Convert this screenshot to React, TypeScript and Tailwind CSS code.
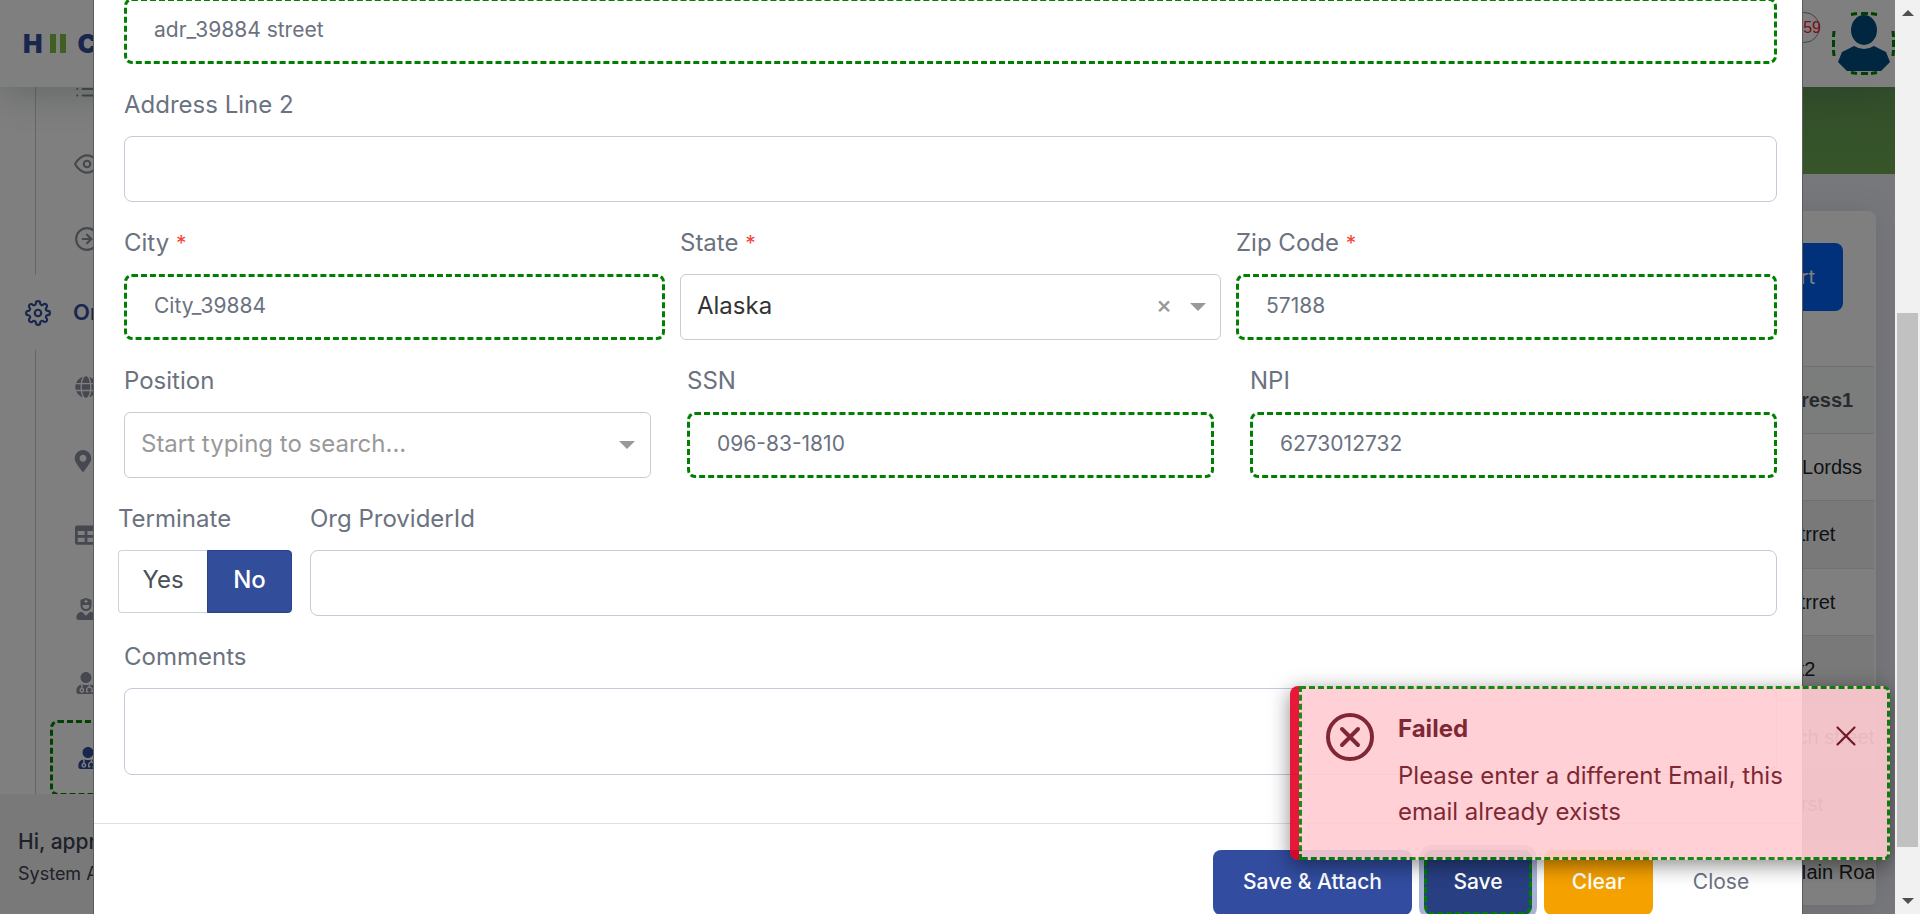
import { useState, type ReactNode } from "react";
import { FiArrowRightCircle, FiEye, FiList, FiSettings, FiX } from "react-icons/fi";
import { FaGlobe, FaMapMarkerAlt, FaTable, FaUserMd, FaUserNurse } from "react-icons/fa";

const dashed = "border-[3px] border-dashed border-[#008000]";
const plain = "border border-[#c5cad9]";
const field = "h-[66px] w-full bg-white pb-1 text-[21px] text-[#6b7280] outline-none";

function Label({ htmlFor, children, required }: { htmlFor: string; children: ReactNode; required?: boolean }) {
  return (
    <label htmlFor={htmlFor} className="mt-[25px] mb-[15px] block text-2xl leading-8 text-[#6b7280]">
      {children}
      {required && <> <span className="text-[21px] leading-6 text-[#f44336]">*</span></>}
    </label>
  );
}

function TextField({ id, label, value, required }: { id: string; label: string; value?: string; required?: boolean }) {
  return (
    <div className="min-w-0 flex-1">
      <Label htmlFor={id} required={required}>{label}</Label>
      <input id={id} defaultValue={value} className={`${field} block rounded-lg ${value ? `${dashed} px-[27px]` : `${plain} px-[29px]`}`} />
    </div>
  );
}

function Caret() {
  return <span className="pointer-events-none border-x-8 border-t-8 border-x-transparent border-t-[#999]" />;
}

function Sidebar() {
  return (
    <aside className="flex w-[330px] flex-none flex-col bg-white text-[#8a909d]">
      <nav className="min-h-0 flex-1 overflow-hidden">
        <ul className="-mt-9 ml-[35px] h-56 border-l border-[#c8cdd6] pl-[38px]">
          <li className="flex h-[75px] items-center"><FiList size={26} /></li>
          <li className="flex h-[75px] items-center"><FiEye size={26} /></li>
          <li className="flex h-[75px] items-center"><FiArrowRightCircle size={26} /></li>
        </ul>
        <div className="flex h-[75px] items-center gap-[22px] pl-[25px] text-[22px] font-semibold text-[#324d9a]">
          <FiSettings size={26} />
          Organization
        </div>
        <ul className="ml-[35px] border-l border-[#c8cdd6] pl-[39px]">
          <li className="flex h-[74px] items-center"><FaGlobe size={22} /></li>
          <li className="flex h-[74px] items-center"><FaMapMarkerAlt size={22} className="-ml-[3px]" /></li>
          <li className="flex h-[74px] items-center"><FaTable size={22} /></li>
          <li className="flex h-[74px] items-center"><FaUserNurse size={22} /></li>
          <li className="flex h-[74px] items-center"><FaUserMd size={22} /></li>
          <li className={`-ml-[25px] flex h-[76px] items-center rounded-lg ${dashed} pl-6 text-[#324d9a]`}><FaUserMd size={22} /></li>
        </ul>
      </nav>
      <div className="h-[120px] flex-none bg-[#f2f2f2] px-[18px] pt-8 text-[#3d4250]">
        <p className="text-[21px] leading-8 font-medium">Hi, appr</p>
        <p className="text-lg leading-8">System Admin</p>
      </div>
    </aside>
  );
}

const rows = ["Von Lordss", "10 strret", "10 strret", "Stret2", "Beach street", "1 horst", "12 Main Road"];

function Page() {
  return (
    <div className="flex h-full flex-col">
      <header className="z-10 flex h-[87px] flex-none items-center justify-between bg-white pl-[23px] shadow-[0_8px_40px_rgba(40,70,60,0.25)]">
        <div className="flex items-center gap-[7px] text-[26px] font-black text-[#324d9a]">
          H
          <span className="flex gap-1">
            <span className="h-[19px] w-1.5 bg-[#7ec142]" />
            <span className="h-[19px] w-1.5 bg-[#7ec142]" />
          </span>
          <span className="ml-[5px]">C</span>
        </div>
        <div className="flex items-center gap-3">
          <div className="mb-8 flex size-[31px] items-center justify-end rounded-full border border-[#888]">
            <span className="-mr-0.5 font-['Liberation_Sans'] text-base text-[#f02030]">59</span>
          </div>
          <svg width="63" height="63" viewBox="0 0 63 63" role="img" aria-label="Profile">
            <g fill="none" stroke="#008000" strokeWidth="3">
              <path d="M19 2.5l6-1M29 1.5h7M39 1.5l6 1M19 60.500l6 1M29 61.500h7M39 61.500l6-1M2 19l-.5 6M1.500 28v7M1.500 38l.5 6M61 19l.5 6M61.500 28v7M61.500 38l-.5 6" />
            </g>
            <ellipse cx="32" cy="18" rx="13" ry="15" fill="#004c80" />
            <path d="M22 34q10 6 20 0l12 6 4 10-9 9H15l-9-9 4-10z" fill="#004c80" />
          </svg>
        </div>
      </header>
      <div className="flex min-h-0 flex-1">
        <Sidebar />
        <main className="min-w-0 flex-1 bg-[#eff0f6]">
          <div className="h-[87px] bg-linear-to-br from-[#60955a] to-[#6eab52]" />
          <section className="mx-[19px] mt-[37px] rounded-lg bg-white pt-8 shadow-[0_0_30px_rgba(40,50,90,0.12)]">
            <div className="flex justify-end pr-[33px]">
              <button className="h-[68px] rounded-lg bg-[#0062f5] px-7 text-xl text-white">Export</button>
            </div>
            <div className="mt-[55px] mr-0.5 flex justify-end overflow-hidden border-t border-[#dfe3e3] font-['Liberation_Sans'] text-xl text-[#212529]">
              <table className="w-[112px] table-fixed border-collapse text-left">
                <thead>
                  <tr className="h-[66px] border-b border-[#dfe3e3] bg-[#f7fbfa] text-[#50545e]"><th>Address1</th></tr>
                </thead>
                <tbody>
                  {rows.map((row, i) => (
                    <tr key={i} className="border-b border-[#dfe3e3] odd:h-[67px] even:h-[68px] even:bg-[#f2f2f2]">
                      <td className="overflow-hidden whitespace-nowrap">{row}</td>
                    </tr>
                  ))}
                </tbody>
              </table>
            </div>
          </section>
        </main>
      </div>
    </div>
  );
}

function Modal() {
  const [terminate, setTerminate] = useState(false);
  return (
    <div role="dialog" aria-label="Provider" className="absolute inset-y-0 right-[93px] left-[94px] overflow-hidden bg-white outline outline-[#5c5c5c]">
      <form className="-mt-0.5" onSubmit={(e) => e.preventDefault()}>
        <div className="pr-[25px] pl-[30px]">
          <input aria-label="Address Line 1" defaultValue="adr_39884 street" className={`${field} ${dashed} block rounded-lg px-[27px]`} />
          <TextField id="address2" label="Address Line 2" />
          <div className="flex gap-[15px]">
            <TextField id="city" label="City" value="City_39884" required />
            <div className="min-w-0 flex-1">
              <Label htmlFor="state" required>State</Label>
              <div className="relative">
                <select id="state" className="block h-[66px] w-full appearance-none rounded-md border border-[#ccc] bg-white px-4 pb-0.5 text-2xl text-[#333]">
                  <option>Alaska</option>
                </select>
                <div className="pointer-events-none absolute inset-y-0 right-[15px] flex items-center gap-[18px]">
                  <button type="button" aria-label="Clear state" className="pointer-events-auto pb-1 text-2xl leading-6 font-medium text-[#999]">×</button>
                  <Caret />
                </div>
              </div>
            </div>
            <TextField id="zip" label="Zip Code" value="57188" required />
          </div>
          <div className="flex gap-9">
            <div className="min-w-0 flex-1">
              <Label htmlFor="position">Position</Label>
              <div className="relative flex items-center">
                <input id="position" placeholder="Start typing to search..." className="h-[66px] w-full rounded-md border border-[#ccc] px-4 pb-1 text-2xl text-[#333] placeholder:text-[#999]" />
                <span className="absolute right-4 flex"><Caret /></span>
              </div>
            </div>
            <TextField id="ssn" label="SSN" value="096-83-1810" />
            <TextField id="npi" label="NPI" value="6273012732" />
          </div>
          <div className="-ml-1.5 flex gap-[18px]">
            <div className="w-[174px] flex-none">
              <Label htmlFor="terminate-yes">Terminate</Label>
              <div className="flex h-[63px] text-2xl">
                <button id="terminate-yes" type="button" onClick={() => setTerminate(true)} className={`w-[89px] rounded-l border border-r-0 border-[#ccd3dd] pb-1 ${terminate ? "bg-[#324d9a] font-medium text-white" : "text-[#495057]"}`}>Yes</button>
                <button type="button" onClick={() => setTerminate(false)} className={`flex-1 rounded-r border pb-1 ${terminate ? "border-[#ccd3dd] text-[#495057]" : "border-[#2a4289] bg-[#324d9a] font-medium text-white"}`}>No</button>
              </div>
            </div>
            <TextField id="org-provider" label="Org ProviderId" />
          </div>
          <Label htmlFor="comments">Comments</Label>
          <textarea id="comments" className={`block h-[87px] w-full rounded-lg ${plain}`} />
        </div>
        <div className="mt-12 flex justify-end gap-3 border-t border-[#dee2e6] pt-[26px] pr-[25px] text-[21px] font-medium text-white">
          <button type="button" className="h-[65px] w-[199px] rounded-lg bg-[#324d9f] pb-0.5">Save &amp; Attach</button>
          <button type="submit" className={`h-[65px] w-[108px] rounded-lg ${dashed} bg-[#283f82] pb-0.5 ring-[5px] ring-[#a9b3d5]`}>Save</button>
          <button type="reset" className="h-[65px] w-[109px] rounded-lg bg-[#f5a100] pb-0.5">Clear</button>
          <button type="button" className="h-[65px] w-[112px] pb-0.5 font-normal text-[#6b7280]">Close</button>
        </div>
      </form>
    </div>
  );
}

function Toast() {
  return (
    <div role="alert" className="absolute right-[5px] bottom-[54px] flex w-[600px] rounded-lg border-l-[9px] border-[#e60023] opacity-90 shadow-[0_5px_20px_rgba(0,0,0,0.5)]">
      <div className={`flex flex-1 rounded-r-md ${dashed} bg-[#ffccd2] pt-6 pr-6 pb-[27px] pl-6 text-[#721020]`}>
        <svg width="48" height="48" viewBox="0 0 48 48" fill="none" stroke="currentColor" strokeWidth="4" strokeLinecap="round" className="mr-6 flex-none" aria-hidden="true">
          <circle cx="24" cy="24" r="22" />
          <path d="M16 16l16 16M32 16L16 32" />
        </svg>
        <div className="flex-1 text-2xl">
          <h2 className="mb-[13px] leading-8 font-bold">Failed</h2>
          <p className="leading-9">Please enter a different Email, this email already exists</p>
        </div>
        <button aria-label="Dismiss" className="mt-1.5 flex-none self-start"><FiX size={34} strokeWidth={1.5} /></button>
      </div>
    </div>
  );
}

function Scrollbar() {
  return (
    <div className="flex w-[25px] flex-none flex-col items-center bg-[#f1f1f1] py-2.5">
      <span className="border-x-[6px] border-b-[6px] border-x-transparent border-b-[#505050]" />
      <div className="mt-[297px] h-[534px] w-[21px] bg-[#c1c1c1]" />
      <span className="mt-auto border-x-[6px] border-t-[6px] border-x-transparent border-t-[#505050]" />
    </div>
  );
}

export default function App() {
  return (
    <div className="flex h-screen overflow-hidden font-[Inter,sans-serif]">
      <div className="relative min-w-0 flex-1 overflow-hidden">
        <Page />
        <div className="absolute inset-0 z-20 bg-black/50" />
        <div className="absolute inset-0 z-30">
          <Modal />
          <Toast />
        </div>
      </div>
      <Scrollbar />
    </div>
  );
}
